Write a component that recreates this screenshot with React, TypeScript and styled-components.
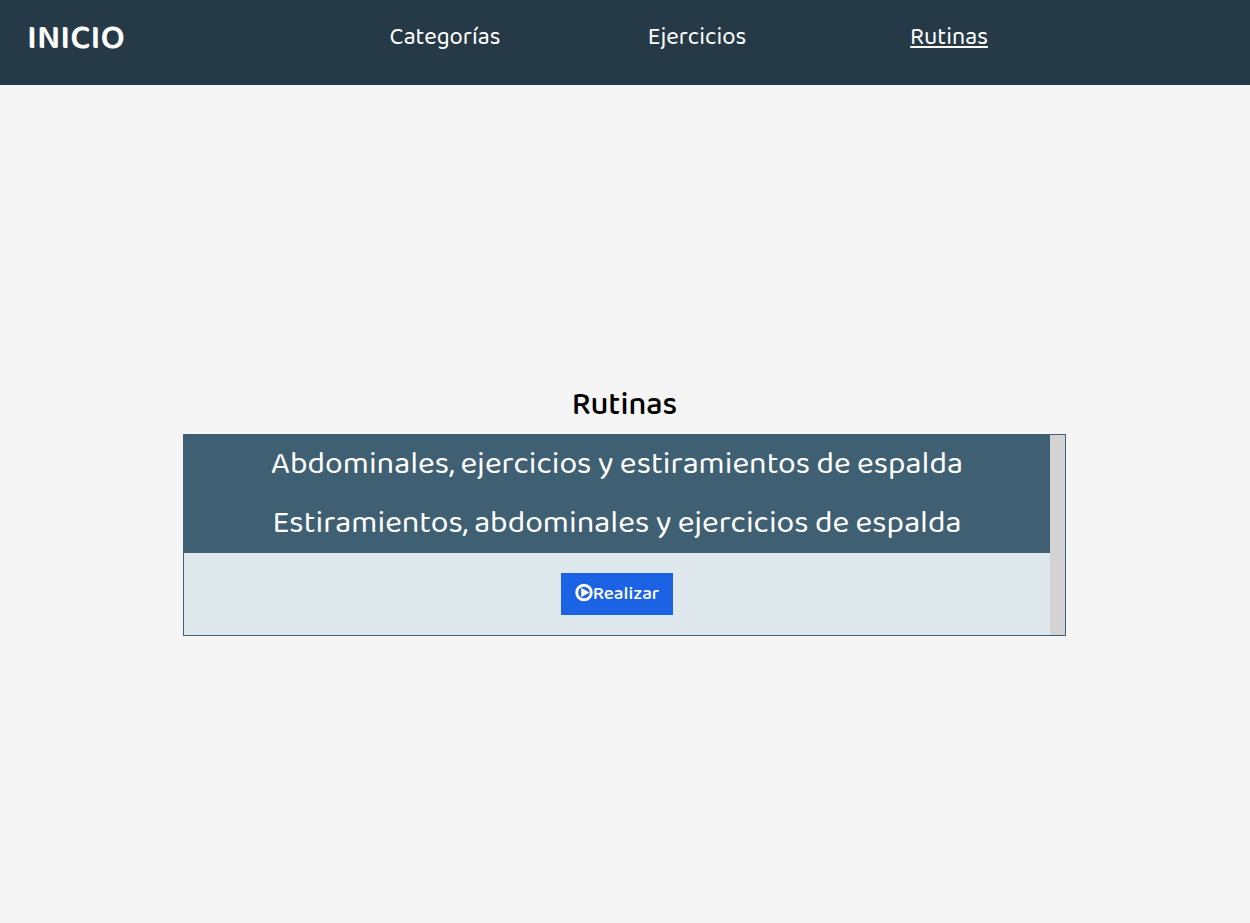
import React, { useState } from "react";
import styled, { createGlobalStyle } from "styled-components";

const GlobalStyle = createGlobalStyle`
  * {
    box-sizing: border-box;
  }
  body {
    margin: 0;
    background: #f5f5f5;
    color: #000;
    font-family: "Baloo 2", "Noto Sans", sans-serif;
  }
`;

const Page = styled.div`
  display: flex;
  flex-direction: column;
  min-height: 100vh;
`;

const Header = styled.header`
  display: grid;
  grid-template-columns: 319fr 756fr 175fr;
  align-items: center;
  padding: 18px 0 27px;
  background: #263947;
`;

const Brand = styled.a`
  padding-left: 27px;
  color: #fff;
  font-size: 35px;
  font-weight: 600;
  line-height: 40px;
  text-decoration: none;
`;

const Nav = styled.nav`
  display: grid;
  grid-template-columns: repeat(3, 1fr);
  justify-items: center;
`;

const NavLink = styled.a<{ $active?: boolean }>`
  color: #fff;
  font-size: 24px;
  line-height: 40px;
  text-decoration: ${(p) => (p.$active ? "underline" : "none")};
  text-decoration-thickness: 2px;
  text-underline-offset: 2px;
  text-decoration-skip-ink: none;
`;

const Main = styled.main`
  display: flex;
  flex: 1;
  flex-direction: column;
  justify-content: center;
  padding: 0 184px 0 183px;
`;

const Title = styled.h1`
  margin: 0;
  padding-top: 5px;
  font-size: 32px;
  font-weight: 500;
  line-height: 56px;
  text-align: center;
`;

const RoutineBox = styled.section`
  display: grid;
  grid-template-columns: 1fr 15px;
  border: 1px solid #3f6073;
`;

const RoutineList = styled.div`
  display: flex;
  flex-direction: column;
`;

const ScrollTrack = styled.div`
  background: #d3d3d3;
`;

const RoutineHeader = styled.button`
  padding: 0 16px;
  border: 0;
  background: #3f6073;
  color: #fff;
  font-family: inherit;
  font-size: 32px;
  line-height: 59px;
  cursor: pointer;
`;

const RoutinePanel = styled.div`
  display: flex;
  justify-content: center;
  padding: 20px;
  background: #dfe8ed;
`;

const StartButton = styled.button`
  display: flex;
  align-items: center;
  height: 42px;
  padding: 0 14px;
  border: 0;
  background: #1c62e5;
  color: #fff;
  font-family: inherit;
  font-size: 19px;
  font-weight: 500;
  line-height: 40px;
  cursor: pointer;
`;

const PlayIcon = () => (
  <svg width="18" height="22" viewBox="0 0 18 22" aria-hidden="true">
    <circle cx="9" cy="9.5" r="7.3" fill="none" stroke="#fff" strokeWidth="2.9" />
    <path d="M6.2 4.8 L14.4 9.5 L6.2 14.2 Z" fill="#fff" />
  </svg>
);

const sections = ["Categorías", "Ejercicios", "Rutinas"];

const routines = [
  "Abdominales, ejercicios y estiramientos de espalda",
  "Estiramientos, abdominales y ejercicios de espalda",
];

export default function App() {
  const [open, setOpen] = useState(1);

  return (
    <Page>
      <GlobalStyle />
      <Header>
        <Brand href="#inicio">INICIO</Brand>
        <Nav>
          {sections.map((name) => (
            <NavLink key={name} href={`#${name}`} $active={name === "Rutinas"}>
              {name}
            </NavLink>
          ))}
        </Nav>
      </Header>
      <Main>
        <Title>Rutinas</Title>
        <RoutineBox>
          <RoutineList>
            {routines.map((name, i) => (
              <React.Fragment key={name}>
                <RoutineHeader
                  type="button"
                  aria-expanded={open === i}
                  onClick={() => setOpen(i)}
                >
                  {name}
                </RoutineHeader>
                {open === i && (
                  <RoutinePanel>
                    <StartButton type="button">
                      <PlayIcon />
                      Realizar
                    </StartButton>
                  </RoutinePanel>
                )}
              </React.Fragment>
            ))}
          </RoutineList>
          <ScrollTrack />
        </RoutineBox>
      </Main>
    </Page>
  );
}
